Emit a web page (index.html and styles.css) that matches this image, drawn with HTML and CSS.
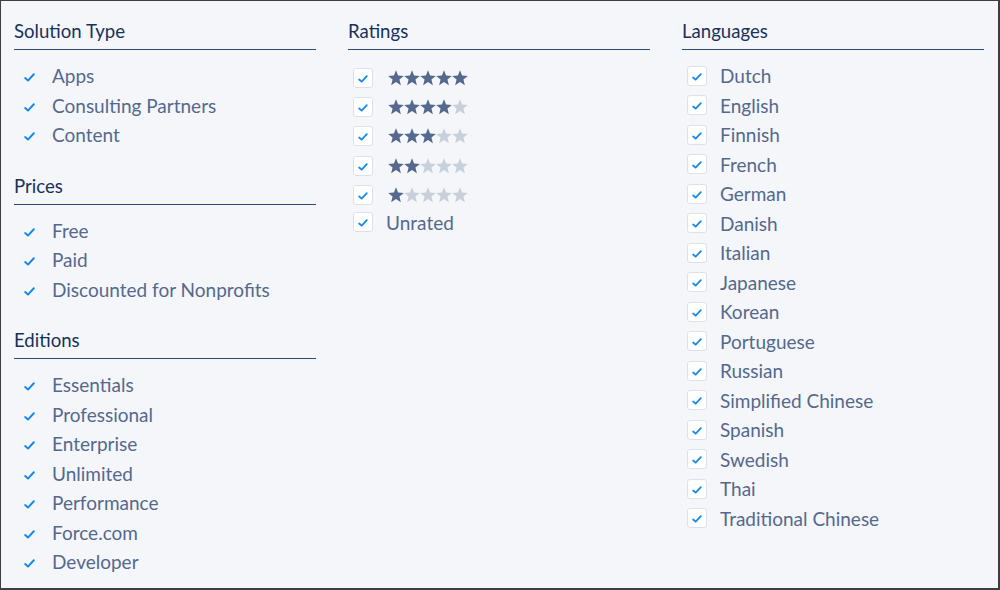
FILE: index.html
```html
<!DOCTYPE html>
<html lang="en">

<head>
    <meta charset="UTF-8">
    <title>Filters</title>
    <link rel="stylesheet" href="styles.css">
</head>

<body>
    <svg class="defs" width="0" height="0">
        <symbol id="check" viewBox="0 0 12 10">
            <path d="M1.2 5.6 L4.3 8.4 L10.8 1.4" fill="none" stroke="currentColor" stroke-width="2.2" stroke-linecap="round" stroke-linejoin="round" />
        </symbol>
        <symbol id="star" viewBox="1 1 22 22">
            <path d="M12 1.2 L14.9 8.6 L22.8 9.1 L16.7 14.1 L18.7 21.9 L12 17.6 L5.3 21.9 L7.3 14.1 L1.2 9.1 L9.1 8.6 Z" />
        </symbol>
    </svg>

    <div class="panel">
        <div class="column">
            <div class="section">
                <h3 class="section-title">Solution Type</h3>
                <ul class="options plain">
                    <li><span class="mark"><svg><use href="#check" /></svg></span>Apps</li>
                    <li><span class="mark"><svg><use href="#check" /></svg></span>Consulting Partners</li>
                    <li><span class="mark"><svg><use href="#check" /></svg></span>Content</li>
                </ul>
            </div>
            <div class="section">
                <h3 class="section-title">Prices</h3>
                <ul class="options plain">
                    <li><span class="mark"><svg><use href="#check" /></svg></span>Free</li>
                    <li><span class="mark"><svg><use href="#check" /></svg></span>Paid</li>
                    <li><span class="mark"><svg><use href="#check" /></svg></span>Discounted for Nonprofits</li>
                </ul>
            </div>
            <div class="section">
                <h3 class="section-title">Editions</h3>
                <ul class="options plain">
                    <li><span class="mark"><svg><use href="#check" /></svg></span>Essentials</li>
                    <li><span class="mark"><svg><use href="#check" /></svg></span>Professional</li>
                    <li><span class="mark"><svg><use href="#check" /></svg></span>Enterprise</li>
                    <li><span class="mark"><svg><use href="#check" /></svg></span>Unlimited</li>
                    <li><span class="mark"><svg><use href="#check" /></svg></span>Performance</li>
                    <li><span class="mark"><svg><use href="#check" /></svg></span>Force.com</li>
                    <li><span class="mark"><svg><use href="#check" /></svg></span>Developer</li>
                </ul>
            </div>
        </div>

        <div class="column">
            <div class="section">
                <h3 class="section-title">Ratings</h3>
                <ul class="options boxed ratings" id="ratings"></ul>
            </div>
        </div>

        <div class="column">
            <div class="section">
                <h3 class="section-title">Languages</h3>
                <ul class="options boxed" id="languages"></ul>
            </div>
        </div>
    </div>

    <script>
        const checkSvg = '<span class="mark"><svg><use href="#check" /></svg></span>';

        // Ratings: 5 down to 1 stars, then unrated
        const ratings = document.getElementById('ratings');
        for (let n = 5; n >= 1; n--) {
            let stars = '';
            for (let i = 1; i <= 5; i++) {
                stars += '<svg class="star ' + (i <= n ? 'on' : 'off') + '"><use href="#star" /></svg>';
            }
            ratings.innerHTML += '<li>' + checkSvg + '<span class="stars">' + stars + '</span></li>';
        }
        ratings.innerHTML += '<li class="unrated">' + checkSvg + 'Unrated</li>';

        const languages = ['Dutch', 'English', 'Finnish', 'French', 'German', 'Danish', 'Italian', 'Japanese',
            'Korean', 'Portuguese', 'Russian', 'Simplified Chinese', 'Spanish', 'Swedish', 'Thai', 'Traditional Chinese'];
        const langList = document.getElementById('languages');
        languages.forEach(lang => {
            langList.innerHTML += '<li>' + checkSvg + lang + '</li>';
        });
    </script>
</body>

</html>
```

FILE: styles.css
```css
body {
    margin: 0;
    font-family: Lato, "Noto Sans", sans-serif;
}

.defs {
    position: absolute;
}

.panel {
    width: 1000px;
    height: 590px;
    box-sizing: border-box;
    background-color: #f4f6f9;
    border: 1px solid #3e3e3e;
    border-right-width: 2px;
    border-bottom-width: 2px;
    padding: 19px 0 0 13px;
    display: grid;
    grid-template-columns: repeat(3, 302px);
    column-gap: 32px;
    align-items: start;
}

.section {
    margin-bottom: 25px;
}

.section-title {
    margin: 0;
    font-size: 18.6px;
    font-weight: normal;
    line-height: 22px;
    color: #16325c;
    padding-bottom: 7px;
    border-bottom: 1px solid #2f4a72;
}

.options {
    list-style: none;
    margin: 11px 0 0;
    padding: 0;
}

.options li {
    display: flex;
    align-items: center;
    height: 29.5px;
    font-size: 19px;
    color: #54698d;
}

.ratings {
    margin-top: 13px;
}

.ratings li {
    height: 29.3px;
}

.ratings .unrated {
    margin-top: -2px;
}

.mark {
    width: 20px;
    height: 20px;
    margin: 0 13px 0 5px;
    box-sizing: border-box;
    display: flex;
    align-items: center;
    justify-content: center;
    color: #1589ee;
    flex-shrink: 0;
}

.mark svg {
    width: 10px;
    height: 8px;
    margin-top: 2px;
}

.plain .mark svg {
    width: 11px;
    height: 9px;
    margin-top: 4px;
}

.boxed .mark {
    background-color: #fff;
    border: 1px solid #dde2ea;
    border-radius: 3px;
}

.stars {
    display: flex;
    margin-left: 2px;
}

.star {
    width: 16px;
    height: 16px;
}

.star.on {
    fill: #54698d;
}

.star.off {
    fill: #c8d0dc;
}
```
